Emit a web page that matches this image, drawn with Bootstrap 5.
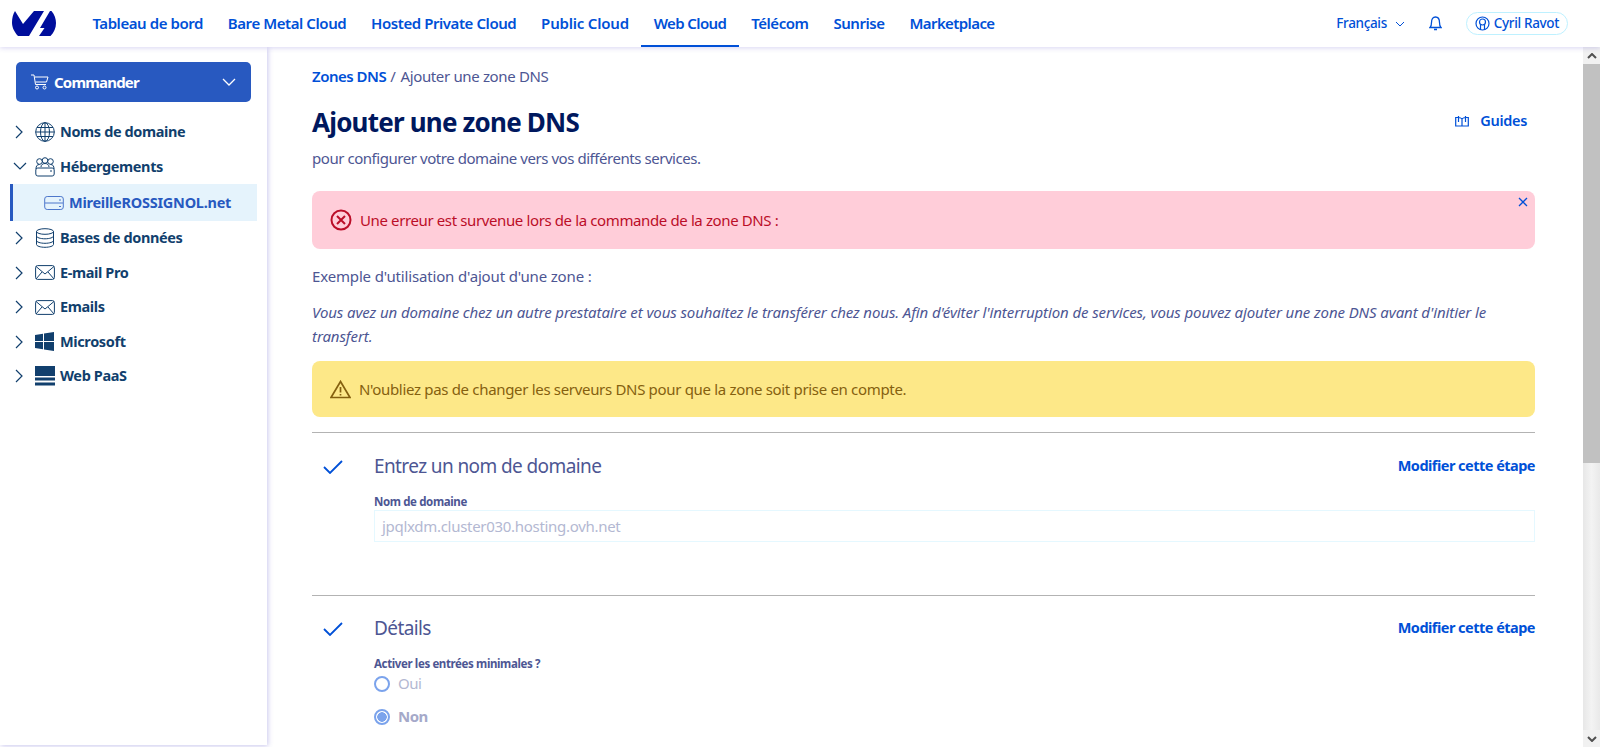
<!DOCTYPE html>
<html lang="fr">
<head>
<meta charset="utf-8">
<title>Ajouter une zone DNS</title>
<link href="https://cdn.jsdelivr.net/npm/bootstrap@5.3.0/dist/css/bootstrap.min.css" rel="stylesheet">
<style>
html,body{height:100%;overflow:hidden}
body{font-family:"Noto Sans","Liberation Sans",sans-serif;font-size:15px;letter-spacing:-.5px;color:#4d5693;background:#fff}
a{text-decoration:none}
.topbar{height:47px;background:#fff;box-shadow:0 1px 5px rgba(80,70,200,.22);position:relative;z-index:3}
.brand-box{width:80px;padding-left:12px}
.topnav-link{display:flex;align-items:center;height:47px;padding:0 12.4px;color:#0050d7;font-weight:600;font-size:15px;letter-spacing:-.43px}
.topnav-link:nth-child(4){letter-spacing:-.2px}
.topnav-link.on{box-shadow:inset 0 -2px 0 #0050d7;letter-spacing:-.6px}
.topnav-link:nth-child(8){letter-spacing:-.6px}
.top-right{color:#0050d7;font-size:13.5px;font-weight:500;padding-right:32px;letter-spacing:-.35px}
.user-pill{border:1px solid #bef1ff;border-radius:12px;height:23px;padding:0 8px 0 8px;gap:4px}
.shell{height:700px}
.side{width:267px;height:698px;flex:none;background:#fff;box-shadow:1px 1px 5px rgba(80,70,200,.3);padding:15px 10px 0 10px;position:relative;z-index:2}
.order-btn{margin-left:6px;width:235px;height:40px;background:#2859c0;border-radius:5px;color:#fff;font-weight:700;font-size:15px;letter-spacing:-.8px;padding:0 15px 0 15px;gap:5px}
.tree{margin-top:13px}
.tree-row{height:34.5px;color:#113f6d;font-weight:700;font-size:14.5px;letter-spacing:-.38px}
.tree-chev{width:25px;padding-left:5px;flex:none}
.chev-down{margin-left:-2px}
.tree-ico{width:20px;margin-right:5px;flex:none}
.tree-sel{margin-top:0;height:37px;background:#e5f3fc;border-left:3px solid #2859c0;color:#2859c0;font-weight:700;font-size:14.5px;letter-spacing:-.25px;padding-left:31px;gap:5px;margin-bottom:0}
.main-col{padding:14px 48px 0 45px;min-width:0}
.crumb{font-size:15px;height:30px;margin-bottom:0;letter-spacing:-.35px}
.crumb a{color:#0050d7;font-weight:600;letter-spacing:-.5px}
.crumb-sep{margin:0 5px 0 4px}
.head-row{margin-top:13px}
.page-h{font-size:26px;font-weight:700;color:#00185e;margin:0;line-height:36px;letter-spacing:-.8px}
.guides{color:#0050d7;font-weight:600;font-size:14.5px;padding-right:8px;gap:11px;letter-spacing:-.3px;margin-top:-2px}
.sub{margin:7px 0 0;line-height:22px;letter-spacing:-.45px}
.msg{border-radius:8px;padding:0 18px;gap:8px;margin:0}
.msg-err{height:58px;margin-top:22px;background:#ffcdd9;color:#bb0d28;position:relative;letter-spacing:-.38px}
.msg-warn{height:56px;margin-top:13px;background:#fde888;color:#85600f;letter-spacing:-.32px}
.msg-x{position:absolute;right:7px;top:6px;line-height:0}
.ex{margin:15px 0 0;line-height:24px;letter-spacing:-.16px}
.ex-i{margin:12px 0 0;line-height:24px;font-style:italic;letter-spacing:-.1px}
.step{border-top:1px solid #b3b3b3;margin:0;padding-top:15px}
.step-one{margin-top:15px;height:163px;padding-top:16px}
.step-tick{width:62px;flex:none;padding:5px 0 0 11px}
.step-h{font-size:19px;font-weight:400;line-height:34px;margin:0;letter-spacing:-.6px}
.step-go{color:#0050d7;font-weight:700;font-size:14.5px;letter-spacing:-.52px}
.fld-lab{display:block;font-weight:700;font-size:11.5px;line-height:15px;margin-top:11px;color:#4d5693;letter-spacing:-.38px}
.fld{height:32px;border:1px solid #e5f8ff;padding:0 7px;line-height:31px;color:#b3b8d2;margin-top:1px;letter-spacing:-.3px}
.rad{height:33px;color:#b3b8d2;gap:8px}
.rad-first{margin-top:-4px}
.rad-dot{width:16px;height:16px;border:2px solid #7ba3ec;border-radius:50%;flex:none;background:#fff}
.rad-dot.sel{background:radial-gradient(circle,#7ba3ec 0 4.5px,#fff 5px)}
.rad-bold{font-weight:700;color:#a5a9c9}
.fake-bar{width:17px;flex:none;background:linear-gradient(90deg,#e7e7e7,#f3f3f3 50%,#e9e9e9);height:700px}
.fake-end{height:17px;color:#505050;background:#f1f1f1}
.fake-thumb{height:399px;background:#c1c1c1}
</style>
</head>
<body>
<header class="topbar d-flex align-items-center">
  <a class="brand-box d-block" href="#" aria-label="OVHcloud"><svg width="45" height="27" viewBox="12 11 45 27" class="d-block"><path fill="#000e9c" d="M15 12 23 25 34 12 44 12 29 37 18 37C13.500 32 12 27.500 12 23.500 12 19 13 15 15 12Z"/><path fill="#000e9c" d="M51.500 12C54.500 15.500 56 20 56 24 56 29 54 33.500 50.500 37H39L44.500 29H40L50 12Z"/></svg></a>
  <nav class="d-flex">
    <a class="topnav-link" href="#">Tableau de bord</a>
    <a class="topnav-link" href="#">Bare Metal Cloud</a>
    <a class="topnav-link" href="#">Hosted Private Cloud</a>
    <a class="topnav-link" href="#">Public Cloud</a>
    <a class="topnav-link on" href="#">Web Cloud</a>
    <a class="topnav-link" href="#">Télécom</a>
    <a class="topnav-link" href="#">Sunrise</a>
    <a class="topnav-link" href="#">Marketplace</a>
  </nav>
  <div class="top-right ms-auto d-flex align-items-center">
    <span>Français</span>
    <svg class="ms-2" width="10" height="6" viewBox="0 0 10 6" fill="none" stroke="#0050d7"><path d="M1 1l4 4 4-4"/></svg>
    <svg class="ms-4" width="13" height="15" viewBox="0 0 13 15" fill="none" stroke="#0050d7" stroke-width="1.300"><path d="M1 11.500c1.200-1 1.500-2 1.500-5C2.500 3 4 1 6.500 1s4 2 4 5.500c0 3 .3 4 1.500 5zM5 13.500h3"/></svg>
    <span class="user-pill d-flex align-items-center ms-4"><svg width="15" height="15" viewBox="0 0 15 15" fill="none" stroke="#0050d7" stroke-width="1.200"><circle cx="7.500" cy="7.500" r="6.500"/><circle cx="7.500" cy="6" r="3"/><path d="M5.500 13.500V9M9.500 13.500V9"/></svg>Cyril Ravot</span>
  </div>
</header>
<div class="shell d-flex">
  <aside class="side">
    <a class="order-btn d-flex align-items-center" href="#">
      <svg width="18" height="16" viewBox="0 0 18 16" fill="none" stroke="#fff"><path d="M0 1h3l1.500 9.500H15M4 3h13l-1.500 5H4.500"/><circle cx="6" cy="13.500" r="1.500"/><circle cx="13.500" cy="13.500" r="1.500"/></svg>
      <span>Commander</span>
      <svg class="ms-auto" width="14" height="8" viewBox="0 0 14 8" fill="none" stroke="#fff" stroke-width="1.300"><path d="M1 1l6 6 6-6"/></svg>
    </a>
    <div class="tree">
      <div class="tree-row d-flex align-items-center"><span class="tree-chev"><svg width="9" height="14" viewBox="0 0 9 14" fill="none" stroke="#113f6d" stroke-width="1.200" class="d-block"><path d="M1 1l6 6-6 6"/></svg></span><svg class="tree-ico" width="20" height="20" viewBox="0 0 20 20" fill="none" stroke="#113f6d"><circle cx="10" cy="10" r="9.300"/><ellipse cx="10" cy="10" rx="4.500" ry="9.300"/><path d="M10 .7v18.600M.7 10h18.600M2 5.500h16M2 14.500h16"/></svg><span>Noms de domaine</span></div>
      <div class="tree-row d-flex align-items-center"><span class="tree-chev"><svg width="14" height="9" viewBox="0 0 14 9" fill="none" stroke="#113f6d" stroke-width="1.200" class="d-block chev-down"><path d="M1 1l6 6 6-6"/></svg></span><svg class="tree-ico" width="20" height="20" viewBox="0 0 20 20" fill="none" stroke="#113f6d"><circle cx="4.500" cy="4.500" r="2.800"/><circle cx="15.500" cy="4.500" r="2.800"/><circle cx="10" cy="3.500" r="2.800"/><path d="M1 12c0-3 1-4.500 3.500-4.500M19 12c0-3-1-4.500-3.500-4.500M6 10c0-2 1.500-3.500 4-3.500S14 8 14 10"/><rect x=".8" y="11" width="18.400" height="8" rx="2"/><path d="M15 14h2"/></svg><span>Hébergements</span></div>
      <div class="tree-sel d-flex align-items-center"><svg width="20" height="16" viewBox="0 0 20 16" fill="none" stroke="#2859c0" opacity=".8"><rect x=".7" y="1.500" width="18.600" height="13" rx="2.500"/><path d="M1 8h18M15 5h2M15 11.500h2"/></svg><span>MireilleROSSIGNOL.net</span></div>
      <div class="tree-row d-flex align-items-center"><span class="tree-chev"><svg width="9" height="14" viewBox="0 0 9 14" fill="none" stroke="#113f6d" stroke-width="1.200" class="d-block"><path d="M1 1l6 6-6 6"/></svg></span><svg class="tree-ico" width="20" height="20" viewBox="0 0 20 20" fill="none" stroke="#113f6d"><ellipse cx="10" cy="3.500" rx="8.500" ry="2.800"/><path d="M1.500 3.500v13c0 1.500 3.800 2.800 8.500 2.800s8.500-1.300 8.500-2.800v-13M1.500 8c0 1.500 3.800 2.800 8.500 2.800s8.500-1.300 8.500-2.800M1.500 12.500c0 1.500 3.800 2.800 8.500 2.800s8.500-1.300 8.500-2.800"/></svg><span>Bases de données</span></div>
      <div class="tree-row d-flex align-items-center"><span class="tree-chev"><svg width="9" height="14" viewBox="0 0 9 14" fill="none" stroke="#113f6d" stroke-width="1.200" class="d-block"><path d="M1 1l6 6-6 6"/></svg></span><svg class="tree-ico" width="20" height="15" viewBox="0 0 20 15" fill="none" stroke="#113f6d"><rect x=".6" y=".6" width="18.800" height="13.800" rx="2"/><path d="M1 1.500 10 9l9-7.500M1 14l6-7M19 14l-6-7"/></svg><span>E-mail Pro</span></div>
      <div class="tree-row d-flex align-items-center"><span class="tree-chev"><svg width="9" height="14" viewBox="0 0 9 14" fill="none" stroke="#113f6d" stroke-width="1.200" class="d-block"><path d="M1 1l6 6-6 6"/></svg></span><svg class="tree-ico" width="20" height="15" viewBox="0 0 20 15" fill="none" stroke="#113f6d"><rect x=".6" y=".6" width="18.800" height="13.800" rx="2"/><path d="M1 1.500 10 9l9-7.500M1 14l6-7M19 14l-6-7"/></svg><span>Emails</span></div>
      <div class="tree-row d-flex align-items-center"><span class="tree-chev"><svg width="9" height="14" viewBox="0 0 9 14" fill="none" stroke="#113f6d" stroke-width="1.200" class="d-block"><path d="M1 1l6 6-6 6"/></svg></span><svg class="tree-ico" width="20" height="19" viewBox="0 0 20 19" fill="#113f6d"><path d="M0 3 8 1.800V9H0zM9 1.600 19 0v9H9zM0 10h8v7.200L0 16zM9 10h10v9L9 17.400z"/></svg><span>Microsoft</span></div>
      <div class="tree-row d-flex align-items-center"><span class="tree-chev"><svg width="9" height="14" viewBox="0 0 9 14" fill="none" stroke="#113f6d" stroke-width="1.200" class="d-block"><path d="M1 1l6 6-6 6"/></svg></span><svg class="tree-ico" width="20" height="20" viewBox="0 0 20 20" fill="#113f6d"><path d="M0 0h20v10H0zM0 11.500h20v3H0zM0 16.500h20v3H0z"/></svg><span>Web PaaS</span></div>
    </div>
  </aside>
  <main class="main-col flex-grow-1">
    <div class="crumb d-flex align-items-center"><a href="#">Zones DNS</a><span class="crumb-sep">/</span><span>Ajouter une zone DNS</span></div>
    <div class="head-row d-flex align-items-center justify-content-between">
      <h1 class="page-h">Ajouter une zone DNS</h1>
      <a class="guides d-flex align-items-center" href="#"><svg width="14" height="12" viewBox="0 0 14 12" fill="none" stroke="#0050d7" stroke-width="1.200"><path d="M.7 2.500h2.300c1.500 0 3 0 4 1.500 1-1.500 2.500-1.500 4-1.500h2.300v8.500H.7zM7 4v7M3.500 1v6M10.500 1v6"/></svg>Guides</a>
    </div>
    <p class="sub">pour configurer votre domaine vers vos différents services.</p>
    <div class="msg msg-err d-flex align-items-center">
      <svg width="22" height="22" viewBox="0 0 22 22" fill="none" stroke="#bb0d28" stroke-width="2"><circle cx="11" cy="11" r="9.500"/><path d="M7 7l8 8M15 7l-8 8"/></svg>
      <span>Une erreur est survenue lors de la commande de la zone DNS :</span>
      <a class="msg-x" href="#" aria-label="Fermer"><svg width="10" height="10" viewBox="0 0 10 10" stroke="#0050d7" stroke-width="1.300"><path d="M1 1l8 8M9 1l-8 8"/></svg></a>
    </div>
    <p class="ex">Exemple d'utilisation d'ajout d'une zone :</p>
    <p class="ex-i">Vous avez un domaine chez un autre prestataire et vous souhaitez le transférer chez nous. Afin d'éviter l'interruption de services, vous pouvez ajouter une zone DNS avant d'initier le transfert.</p>
    <div class="msg msg-warn d-flex align-items-center">
      <svg width="21" height="19" viewBox="0 0 21 19" fill="none" stroke="#85600f" stroke-width="1.700"><path d="M10.500 1.500 20 17.500H1zM10.500 7v5.500M10.500 14v1.500"/></svg>
      <span>N'oubliez pas de changer les serveurs DNS pour que la zone soit prise en compte.</span>
    </div>
    <section class="step step-one d-flex">
      <div class="step-tick"><svg width="20" height="14" viewBox="0 0 20 14" fill="none" stroke="#0050d7" stroke-width="1.800"><path d="M1 7l6 6L19 1"/></svg></div>
      <div class="flex-grow-1">
        <div class="d-flex align-items-center justify-content-between"><h2 class="step-h">Entrez un nom de domaine</h2><a class="step-go" href="#">Modifier cette étape</a></div>
        <label class="fld-lab">Nom de domaine</label>
        <div class="fld">jpqlxdm.cluster030.hosting.ovh.net</div>
      </div>
    </section>
    <section class="step d-flex">
      <div class="step-tick"><svg width="20" height="14" viewBox="0 0 20 14" fill="none" stroke="#0050d7" stroke-width="1.800"><path d="M1 7l6 6L19 1"/></svg></div>
      <div class="flex-grow-1">
        <div class="d-flex align-items-center justify-content-between"><h2 class="step-h">Détails</h2><a class="step-go" href="#">Modifier cette étape</a></div>
        <label class="fld-lab">Activer les entrées minimales ?</label>
        <div class="rad rad-first d-flex align-items-center"><span class="rad-dot"></span><span>Oui</span></div>
        <div class="rad d-flex align-items-center"><span class="rad-dot sel"></span><span class="rad-bold">Non</span></div>
      </div>
    </section>
  </main>
  <div class="fake-bar d-flex flex-column" aria-hidden="true">
    <div class="fake-end d-flex align-items-center justify-content-center"><svg width="10" height="6" viewBox="0 0 10 6" fill="none" stroke="#505050" stroke-width="2"><path d="M1 5l4-4 4 4"/></svg></div>
    <div class="fake-thumb"></div>
    <div class="fake-end d-flex align-items-center justify-content-center mt-auto"><svg width="10" height="6" viewBox="0 0 10 6" fill="none" stroke="#505050" stroke-width="2"><path d="M1 1l4 4 4-4"/></svg></div>
  </div>
</div>
<script src="https://cdn.jsdelivr.net/npm/bootstrap@5.3.0/dist/js/bootstrap.bundle.min.js"></script>
</body>
</html>
